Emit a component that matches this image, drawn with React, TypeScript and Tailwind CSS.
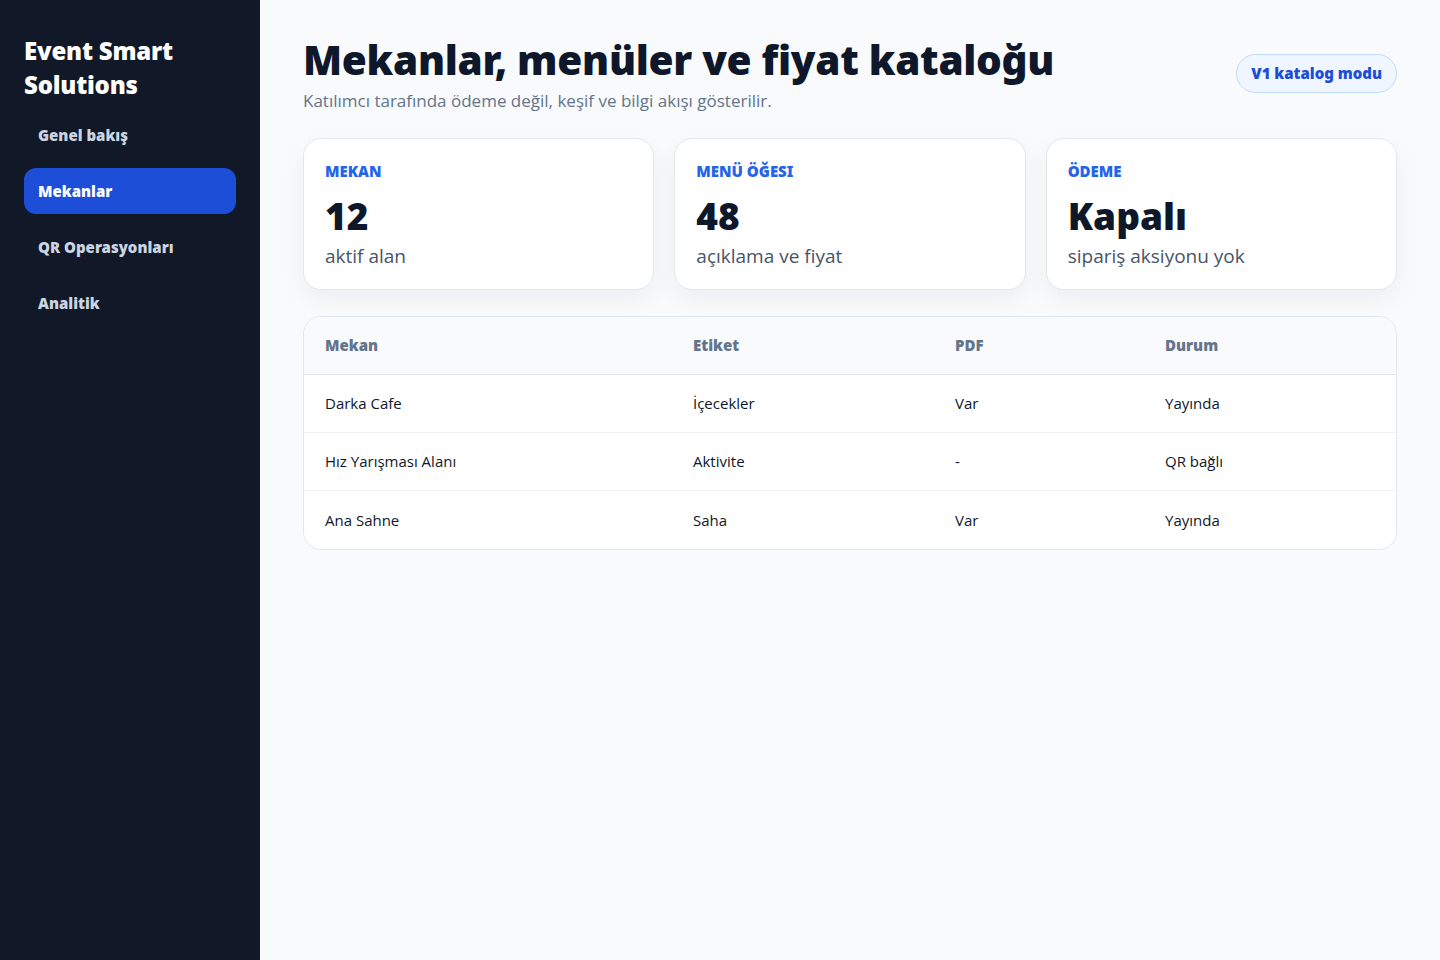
const nav = ['Genel bakış', 'Mekanlar', 'QR Operasyonları', 'Analitik'];

const stats = [
  { label: 'MEKAN', value: '12', note: 'aktif alan' },
  { label: 'MENÜ ÖĞESI', value: '48', note: 'açıklama ve fiyat' },
  { label: 'ÖDEME', value: 'Kapalı', note: 'sipariş aksiyonu yok' },
];

const venues = [
  { name: 'Darka Cafe', tag: 'İçecekler', pdf: 'Var', status: 'Yayında' },
  { name: 'Hız Yarışması Alanı', tag: 'Aktivite', pdf: '-', status: 'QR bağlı' },
  { name: 'Ana Sahne', tag: 'Saha', pdf: 'Var', status: 'Yayında' },
];

export default function App() {
  return (
    <div className="flex min-h-screen bg-[#f8fafc] font-['Open_Sans',sans-serif] text-[#0f172a]">
      {/* Sidebar */}
      <aside className="w-[260px] shrink-0 bg-[#111827] px-6 pt-[34px]">
        <h1 className="font-['Noto_Sans',sans-serif] text-[24px] font-black leading-[34px] text-white tracking-[-0.2px]">
          Event Smart<br />Solutions
        </h1>
        <nav className="mt-[10px] flex flex-col gap-[10px]">
          {nav.map(item => (
            <div key={item}
              className={`flex h-[46px] items-center rounded-[12px] px-[14px] font-['Noto_Sans',sans-serif] text-[15px] font-black ${item === 'Mekanlar' ? 'bg-[#1d4ed8] text-white' : 'text-[#cbd5e1]'}`}>
              {item}
            </div>
          ))}
        </nav>
      </aside>

      {/* Main */}
      <main className="flex-1 px-[43px] pt-[34px]">
        <div className="flex items-start justify-between">
          <div>
            <h2 className="font-['Noto_Sans',sans-serif] text-[40.5px] font-black leading-[52px] text-[#0f172a] tracking-[-0.3px]">
              Mekanlar, menüler ve fiyat kataloğu
            </h2>
            <p className="mt-[2px] text-[17px] text-[#64748b]">Katılımcı tarafında ödeme değil, keşif ve bilgi akışı gösterilir.</p>
          </div>
          <span className="mt-[20px] rounded-full border border-[#bfdbfe] bg-[#eff6ff] px-[14px] py-[7px] font-['Noto_Sans',sans-serif] text-[15px] font-black text-[#1d4ed8]">
            V1 katalog modu
          </span>
        </div>

        {/* Stat cards */}
        <div className="mt-[24px] grid grid-cols-3 gap-[20px]">
          {stats.map(s => (
            <div key={s.label} className="h-[152px] rounded-[18px] border border-[#e2e8f0] bg-white px-[21px] pt-[21px] shadow-[0_10px_24px_rgba(15,23,42,0.05)]">
              <div className="font-['Noto_Sans',sans-serif] text-[15px] font-black leading-[22px] text-[#2563eb]">{s.label}</div>
              <div className="mt-[12px] font-['Noto_Sans',sans-serif] text-[37px] font-black leading-[44px] text-[#0f172a]">{s.value}</div>
              <div className="mt-[4px] text-[19px] text-[#475569]">{s.note}</div>
            </div>
          ))}
        </div>

        {/* Venue table */}
        <div className="mt-[26px] overflow-hidden rounded-[18px] border border-[#e2e8f0] bg-white">
          <table className="w-full table-fixed border-collapse text-left">
            <thead className="bg-[#f8fafc]">
              <tr className="h-[58px] border-b border-[#e2e8f0]">
                <th className="w-[368px] pl-[21px] font-['Noto_Sans',sans-serif] text-[15px] font-black text-[#64748b]">Mekan</th>
                <th className="w-[262px] pl-[21px] font-['Noto_Sans',sans-serif] text-[15px] font-black text-[#64748b]">Etiket</th>
                <th className="w-[210px] pl-[21px] font-['Noto_Sans',sans-serif] text-[15px] font-black text-[#64748b]">PDF</th>
                <th className="pl-[21px] font-['Noto_Sans',sans-serif] text-[15px] font-black text-[#64748b]">Durum</th>
              </tr>
            </thead>
            <tbody>
              {venues.map((v, i) => (
                <tr key={v.name} className={`h-[58px] text-[15px] text-[#0f172a] ${i < venues.length - 1 ? 'border-b border-[#eef2f7]' : ''}`}>
                  <td className="pl-[21px]">{v.name}</td>
                  <td className="pl-[21px]">{v.tag}</td>
                  <td className="pl-[21px]">{v.pdf}</td>
                  <td className="pl-[21px]">{v.status}</td>
                </tr>
              ))}
            </tbody>
          </table>
        </div>
      </main>
    </div>
  );
}
